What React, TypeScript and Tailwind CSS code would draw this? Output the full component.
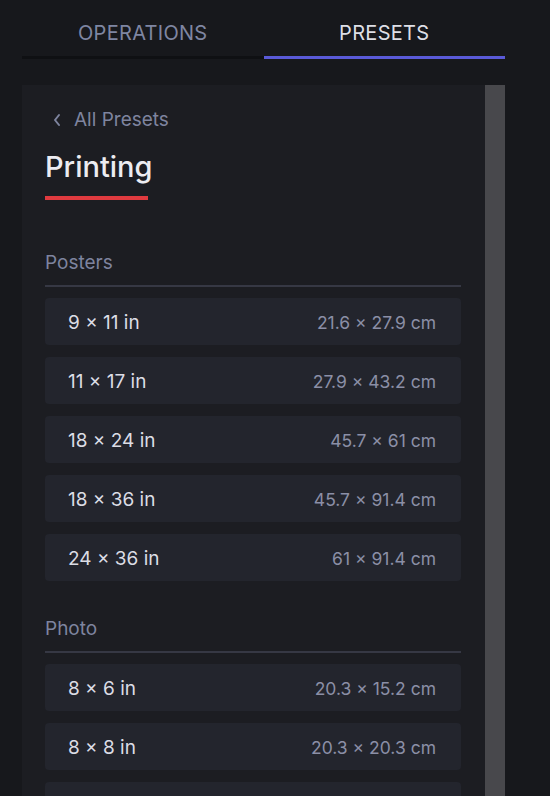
import React from "react";

const posters = [
  ["9 × 11 in", "21.6 × 27.9 cm"],
  ["11 × 17 in", "27.9 × 43.2 cm"],
  ["18 × 24 in", "45.7 × 61 cm"],
  ["18 × 36 in", "45.7 × 91.4 cm"],
  ["24 × 36 in", "61 × 91.4 cm"],
];
const photo = [
  ["8 × 6 in", "20.3 × 15.2 cm"],
  ["8 × 8 in", "20.3 × 20.3 cm"],
  ["10 × 8 in", "25.4 × 20.3 cm"],
];

function Row({ a, b }: { a: string; b: string }) {
  return (
    <div className="flex h-[47px] items-center justify-between rounded-[4px] bg-[#23252d] pl-[23px] pr-[25px] pt-[3px] shrink-0">
      <span className="text-[19px] text-[#dcdde5]">{a}</span>
      <span className="text-[17.5px] text-[#8b8fa6]">{b}</span>
    </div>
  );
}

function Section({ title, rows }: { title: string; rows: string[][] }) {
  return (
    <div className="flex flex-col">
      <div className="text-[19px] leading-[24px] text-[#7e849f] pb-[10px] pt-[1px]">{title}</div>
      <div className="h-[2px] bg-[#363844]" />
      <div className="flex flex-col gap-[12px] pt-[11px]">
        {rows.map((r) => (
          <Row key={r[0]} a={r[0]} b={r[1]} />
        ))}
      </div>
    </div>
  );
}

export default function App() {
  return (
    <div
      className="h-[796px] w-[550px] overflow-hidden bg-[#17181c] flex flex-col"
      style={{ fontFamily: "Inter, 'Noto Sans', sans-serif" }}
    >
      <div className="mx-[22px] w-[483px] flex shrink-0">
        <div className="flex-1 flex flex-col">
          <div className="h-[56px] pt-[9px] flex items-center justify-center text-[20px] tracking-[0.3px] text-[#7f86a2]">
            OPERATIONS
          </div>
          <div className="h-[3px] bg-[#0f1013]" />
        </div>
        <div className="flex-1 flex flex-col">
          <div className="h-[56px] pt-[9px] flex items-center justify-center text-[20px] tracking-[0.3px] text-[#dedfe6]">
            PRESETS
          </div>
          <div className="h-[3px] bg-[#5a5ad8]" />
        </div>
      </div>
      <div className="mt-[26px] mx-[22px] w-[483px] flex flex-1 min-h-0 bg-[#1c1d22]">
        <div className="flex-1 flex flex-col pl-[23px] pr-[24px] pt-[108px] relative">
          <div className="absolute left-[30px] top-[24px] flex items-center gap-[12px] text-[#7e849f]">
            <svg width="10" height="14" viewBox="0 0 10 14" fill="none">
              <path d="M7 2 L3 7 L7 12" stroke="#7e849f" strokeWidth="2" strokeLinecap="round" strokeLinejoin="round" />
            </svg>
            <span className="text-[19px] leading-[22px]">All Presets</span>
          </div>
          <div className="absolute left-[23px] top-[64px] flex flex-col">
            <span className="text-[29px] leading-[36px] text-[#ececf1] font-medium">Printing</span>
            <div className="mt-[11px] h-[4px] w-[103px] bg-[#e03a3f]" />
          </div>
          <div className="flex flex-col gap-[35px] mt-[57px]">
            <Section title="Posters" rows={posters} />
            <Section title="Photo" rows={photo} />
          </div>
        </div>
        <div className="w-[20px] bg-[#48484c]" />
      </div>
    </div>
  );
}
